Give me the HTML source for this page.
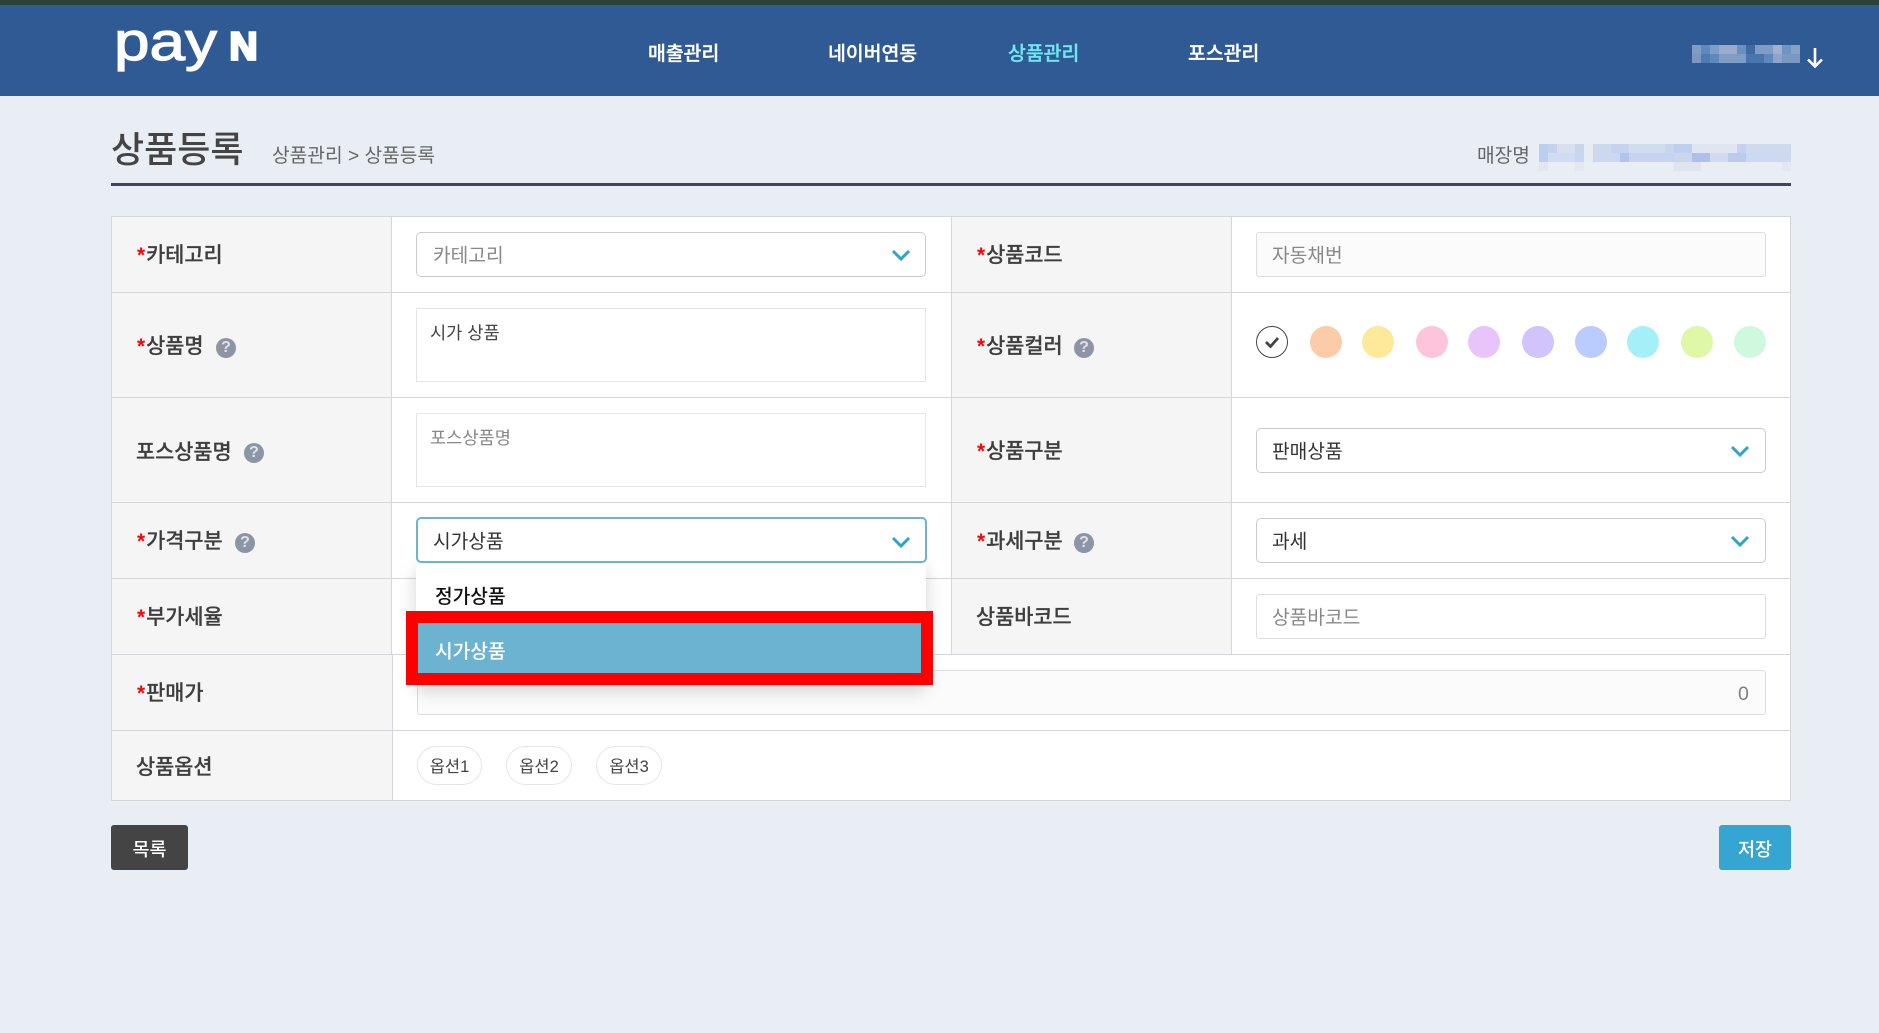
<!DOCTYPE html>
<html lang="ko">
<head>
<meta charset="utf-8">
<title>상품등록</title>
<style>
html,body{margin:0;padding:0}
body{width:1879px;height:1033px;position:relative;overflow:hidden;background:#e9edf4;font-family:"Liberation Sans","Noto Sans CJK KR",sans-serif;color:#444}
div,span{box-sizing:border-box}
.a{position:absolute}
.t{position:absolute;height:30px;line-height:30px;white-space:nowrap;font-size:19.2px}
.nav{color:#fff;font-weight:500;font-size:19.4px;-webkit-text-stroke:.3px currentColor}
.cell{position:absolute;background:#f5f5f5;border-right:1px solid #d4d6d9;border-bottom:1px solid #d4d6d9}
.lab{font-size:20.8px;font-weight:500;color:#3e3e3e;-webkit-text-stroke:.2px #3e3e3e}
.lab i{font-style:normal;color:#f00;font-weight:700;margin-right:1px;margin-left:1px;-webkit-text-stroke:0}
.sel{position:absolute;background:#fff;border:1px solid #c9cbcf;border-radius:5px}
.inp{position:absolute;background:#fbfbfb;border:1px solid #dcdee0;border-radius:3px}
.ta{position:absolute;background:#fff;border:1px solid #e3e5e8;left:416px;width:510px}
.q{position:absolute;width:20px;height:20px;border-radius:50%;background:#8d94a3;color:#dfe2e7;font-size:16px;line-height:20px;text-align:center;font-weight:700}
.dot{position:absolute;top:326px;width:32px;height:32px;border-radius:50%}
.pill{position:absolute;top:746px;height:39px;border:1px solid #e3e5e8;border-radius:20px;background:#fff;text-align:center;line-height:40px;font-size:16.5px;color:#444}
.chev{position:absolute;width:20px;height:12px}
.m{position:absolute}
</style>
</head>
<body>
<div class="a" style="left:0;top:0;width:1879px;height:5px;background:#2a4238"></div>
<div class="a" style="left:0;top:5px;width:1879px;height:91px;background:#305a94"></div>

<svg class="a" style="left:110px;top:20px" width="160" height="56" viewBox="0 0 160 56">
<text x="4" y="40" font-family="Liberation Sans" font-size="54" fill="#fff" stroke="#fff" stroke-width="1.2" textLength="103" lengthAdjust="spacingAndGlyphs">pay</text>
<text x="119.5" y="39.5" font-family="Liberation Sans" font-weight="700" font-size="39" fill="#fff" stroke="#fff" stroke-width="2.8" textLength="28" lengthAdjust="spacingAndGlyphs">N</text>
</svg>

<div class="t nav" style="left:648px;top:39px">매출관리</div>
<div class="t nav" style="left:828px;top:39px">네이버연동</div>
<div class="t nav" style="left:1008px;top:39px;color:#6fe6f0">상품관리</div>
<div class="t nav" style="left:1188px;top:39px">포스관리</div>

<!-- blurred user -->
<div class="m" style="left:1692px;top:45px;width:108px;height:18px;background:linear-gradient(90deg,#7e9cc4 0 9px,#5f89bd 9px 18px,#7f9ec6 18px 27px,#9aaccb 27px 45px,#6b90bf 45px 54px,#3f699f 54px 63px,#7e9cc4 63px 81px,#a0b0ce 81px 90px,#6f94c0 90px 99px,#83a3c8 99px 108px)"></div>
<div class="m" style="left:1692px;top:54px;width:108px;height:9px;background:linear-gradient(90deg,#7e97c0 0 9px,#4f7bb2 9px 18px,#5f89bb 18px 27px,#7f9cc4 27px 54px,#4a75ac 54px 72px,#5f88bb 72px 81px,#8fa4c8 81px 90px,#7a98c2 90px 108px)"></div>
<svg class="a" style="left:1805px;top:46px" width="20" height="23" viewBox="0 0 20 23"><path d="M10 2V20M3 13.5L10 20.5L17 13.5" fill="none" stroke="#fff" stroke-width="2.6"/></svg>

<div class="t" style="left:111px;top:132px;height:36px;line-height:36px;font-size:36px;font-weight:500;color:#444">상품등록</div>
<div class="t" style="left:272px;top:142px;color:#666">상품관리 &gt; 상품등록</div>
<div class="t" style="left:1477px;top:142px;color:#666">매장명</div>

<!-- blurred store -->
<div class="m" style="left:1539px;top:144px;width:252px;height:18px;background:linear-gradient(90deg,#bccdee 0 9px,#c3d2ef 9px 18px,#d8e0f0 18px 36px,#c8d5ee 36px 45px,#e6ebf4 45px 54px,#ccd8f0 54px 72px,#c6d3f0 72px 90px,#d2dcef 90px 126px,#c8d5ef 126px 135px,#bfcfef 135px 153px,#dfe5f2 153px 198px,#c4d2ef 198px 207px,#cfdaf1 207px 252px)"></div>
<div class="m" style="left:1539px;top:153px;width:252px;height:9px;background:linear-gradient(90deg,#bccdee 0 9px,#d0dcf2 9px 36px,#c9d6ee 36px 45px,#e6ebf4 45px 54px,#ccd8f0 54px 81px,#b2c3ee 81px 90px,#c6d3ee 90px 135px,#c8d6ee 135px 153px,#aebfec 153px 171px,#d0dbf0 171px 189px,#bccbec 189px 207px,#cdd9f1 207px 252px)"></div>
<div class="m" style="left:1539px;top:162px;width:252px;height:9px;background:linear-gradient(90deg,#e1e6f1 0 9px,#e9edf4 9px 36px,#e2e7f1 36px 45px,#e9edf4 45px 135px,#dfe4ef 135px 162px,#e9edf4 162px 243px,#e3e7f1 243px 252px)"></div>

<div class="a" style="left:111px;top:183px;width:1680px;height:3px;background:#3f4462"></div>

<!-- table -->
<div class="a" style="left:111px;top:216px;width:1680px;height:585px;background:#fff;border:1px solid #d4d6d9"></div>
<div class="cell" style="left:112px;top:217px;width:280px;height:76px"></div>
<div class="cell" style="left:112px;top:293px;width:280px;height:105px"></div>
<div class="cell" style="left:112px;top:398px;width:280px;height:105px"></div>
<div class="cell" style="left:112px;top:503px;width:280px;height:76px"></div>
<div class="cell" style="left:112px;top:579px;width:280px;height:76px"></div>
<div class="cell" style="left:112px;top:655px;width:281px;height:76px"></div>
<div class="cell" style="left:112px;top:731px;width:281px;height:69px;border-bottom:0"></div>
<div class="cell" style="left:951px;top:217px;width:281px;height:76px;border-left:1px solid #d4d6d9"></div>
<div class="cell" style="left:951px;top:293px;width:281px;height:105px;border-left:1px solid #d4d6d9"></div>
<div class="cell" style="left:951px;top:398px;width:281px;height:105px;border-left:1px solid #d4d6d9"></div>
<div class="cell" style="left:951px;top:503px;width:281px;height:76px;border-left:1px solid #d4d6d9"></div>
<div class="cell" style="left:951px;top:579px;width:281px;height:76px;border-left:1px solid #d4d6d9"></div>
<div class="a" style="left:392px;top:292px;width:559px;height:1px;background:#d4d6d9"></div>
<div class="a" style="left:1232px;top:292px;width:558px;height:1px;background:#d4d6d9"></div>
<div class="a" style="left:392px;top:397px;width:559px;height:1px;background:#d4d6d9"></div>
<div class="a" style="left:1232px;top:397px;width:558px;height:1px;background:#d4d6d9"></div>
<div class="a" style="left:392px;top:502px;width:559px;height:1px;background:#d4d6d9"></div>
<div class="a" style="left:1232px;top:502px;width:558px;height:1px;background:#d4d6d9"></div>
<div class="a" style="left:392px;top:578px;width:559px;height:1px;background:#d4d6d9"></div>
<div class="a" style="left:1232px;top:578px;width:558px;height:1px;background:#d4d6d9"></div>
<div class="a" style="left:392px;top:654px;width:1398px;height:1px;background:#d4d6d9"></div>
<div class="a" style="left:392px;top:730px;width:1398px;height:1px;background:#d4d6d9"></div>

<!-- labels left -->
<div class="t lab" style="left:136px;top:241px"><i>*</i>카테고리</div>
<div class="t lab" style="left:136px;top:332px"><i>*</i>상품명</div>
<div class="q" style="left:216px;top:338px">?</div>
<div class="t lab" style="left:136px;top:438px">포스상품명</div>
<div class="q" style="left:244px;top:443px">?</div>
<div class="t lab" style="left:136px;top:527px"><i>*</i>가격구분</div>
<div class="q" style="left:235px;top:533px">?</div>
<div class="t lab" style="left:136px;top:603px"><i>*</i>부가세율</div>
<div class="t lab" style="left:136px;top:679px"><i>*</i>판매가</div>
<div class="t lab" style="left:136px;top:753px">상품옵션</div>

<!-- labels right -->
<div class="t lab" style="left:976px;top:241px"><i>*</i>상품코드</div>
<div class="t lab" style="left:976px;top:332px"><i>*</i>상품컬러</div>
<div class="q" style="left:1074px;top:338px">?</div>
<div class="t lab" style="left:976px;top:437px"><i>*</i>상품구분</div>
<div class="t lab" style="left:976px;top:527px"><i>*</i>과세구분</div>
<div class="q" style="left:1074px;top:533px">?</div>
<div class="t lab" style="left:976px;top:603px">상품바코드</div>

<!-- fields left -->
<div class="sel" style="left:416px;top:232px;width:510px;height:45px"></div>
<div class="t" style="left:433px;top:242px;color:#888">카테고리</div>
<svg class="chev" style="left:891px;top:249px" viewBox="0 0 20 12"><path d="M2 2L10 10L18 2" fill="none" stroke="#2fa5c8" stroke-width="3"/></svg>

<div class="ta" style="top:308px;height:74px"></div>
<div class="t" style="left:430px;top:318px;font-size:17.6px;color:#444">시가 상품</div>
<div class="ta" style="top:413px;height:74px"></div>
<div class="t" style="left:430px;top:423px;font-size:17.6px;color:#888">포스상품명</div>

<!-- right fields -->
<div class="inp" style="left:1256px;top:232px;width:510px;height:45px"></div>
<div class="t" style="left:1272px;top:242px;color:#888">자동채번</div>

<div class="dot" style="left:1256px;background:#fff;border:1.5px solid #444"></div>
<svg class="a" style="left:1263px;top:334px" width="18" height="16" viewBox="0 0 18 16"><path d="M3 8L7.5 12.5L15 4" fill="none" stroke="#444" stroke-width="2.8"/></svg>
<div class="dot" style="left:1310px;background:#fdcba8"></div>
<div class="dot" style="left:1362px;background:#fee89a"></div>
<div class="dot" style="left:1416px;background:#fdc4dc"></div>
<div class="dot" style="left:1468px;background:#e8c4fb"></div>
<div class="dot" style="left:1522px;background:#d1c3fb"></div>
<div class="dot" style="left:1575px;background:#b9ccfd"></div>
<div class="dot" style="left:1627px;background:#a5f0f8"></div>
<div class="dot" style="left:1681px;background:#def8a8"></div>
<div class="dot" style="left:1734px;background:#d0f8df"></div>

<div class="sel" style="left:1256px;top:428px;width:510px;height:45px"></div>
<div class="t" style="left:1272px;top:438px;color:#333">판매상품</div>
<svg class="chev" style="left:1730px;top:445px" viewBox="0 0 20 12"><path d="M2 2L10 10L18 2" fill="none" stroke="#2fa5c8" stroke-width="3"/></svg>

<div class="sel" style="left:1256px;top:518px;width:510px;height:45px"></div>
<div class="t" style="left:1272px;top:528px;color:#333">과세</div>
<svg class="chev" style="left:1730px;top:535px" viewBox="0 0 20 12"><path d="M2 2L10 10L18 2" fill="none" stroke="#2fa5c8" stroke-width="3"/></svg>

<div class="sel" style="left:1256px;top:594px;width:510px;height:45px;border-color:#dcdee0;border-radius:3px"></div>
<div class="t" style="left:1272px;top:604px;color:#888">상품바코드</div>

<!-- price -->
<div class="inp" style="left:417px;top:670px;width:1349px;height:45px"></div>
<div class="t" style="left:1738px;top:679px;color:#808080;font-size:19.5px">0</div>

<!-- options -->
<div class="pill" style="left:417px;width:65px">옵션1</div>
<div class="pill" style="left:506px;width:66px">옵션2</div>
<div class="pill" style="left:596px;width:66px">옵션3</div>

<!-- buttons -->
<div class="a" style="left:111px;top:825px;width:77px;height:45px;background:#444;border-radius:3px;color:#fff;font-size:18.5px;font-weight:500;line-height:49px;text-align:center">목록</div>
<div class="a" style="left:1719px;top:825px;width:72px;height:45px;background:#35a5d1;border-radius:3px;color:#fff;font-size:18.5px;font-weight:500;line-height:49px;text-align:center">저장</div>

<!-- dropdown -->
<div class="a" style="left:416px;top:564px;width:510px;height:120px;background:#fff;border-radius:4px;box-shadow:0 6px 18px rgba(0,0,0,.18)"></div>
<div class="sel" style="left:416px;top:517px;width:511px;height:46px;border:2px solid #6db3cf"></div>
<div class="t" style="left:433px;top:528px;color:#333">시가상품</div>
<svg class="chev" style="left:891px;top:536px" viewBox="0 0 20 12"><path d="M2 2L10 10L18 2" fill="none" stroke="#2fa5c8" stroke-width="3"/></svg>
<div class="t" style="left:435px;top:583px;color:#111;font-weight:500">정가상품</div>
<div class="a" style="left:406px;top:611px;width:527px;height:74px;background:#6cb3d1;border:12px solid #f00"></div>
<div class="t" style="left:435px;top:638px;color:#fff;font-weight:500">시가상품</div>
</body>
</html>
